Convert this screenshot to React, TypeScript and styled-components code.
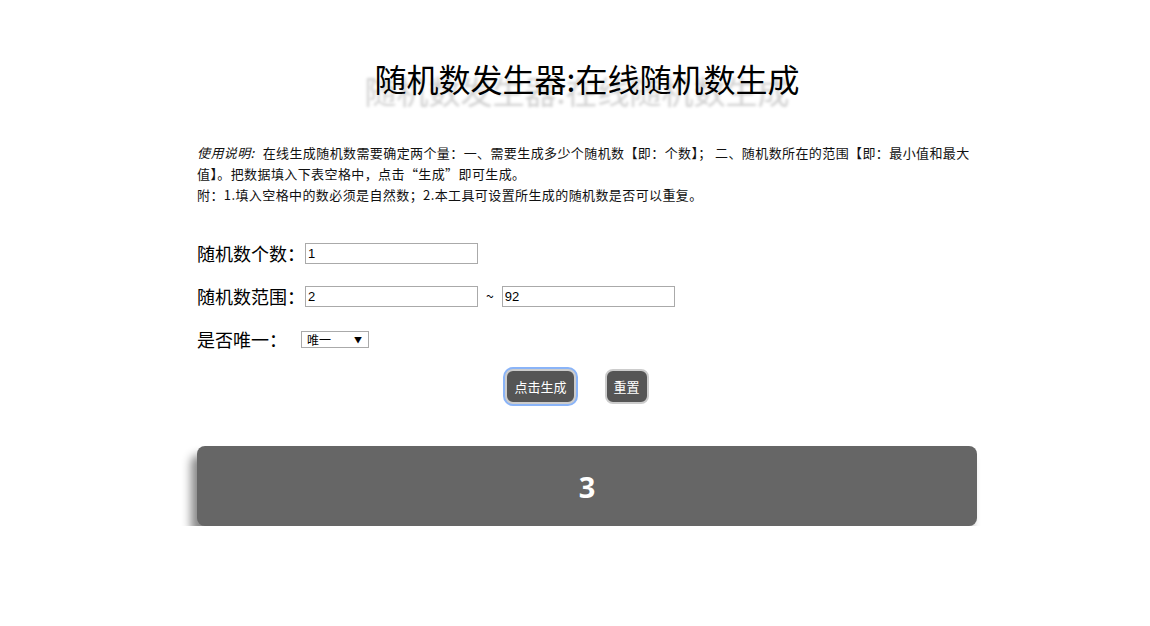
import styled, { createGlobalStyle } from "styled-components";

const GlobalStyle = createGlobalStyle`
  body {
    margin: 0;
    background: #fff;
    font-family: "Noto Sans CJK SC", "Liberation Sans", sans-serif;
    color: #000;
  }
`;

const Page = styled.div`
  width: 780px;
  margin: 0 auto;
  padding: 58px 0 0 24px;
`;

const Title = styled.h1`
  margin: 0;
  text-align: center;
  font-size: 32px;
  font-weight: 400;
  line-height: 40px;
  color: #000;
  text-shadow: -10px 12px 3px #d0d0d0;
`;

const Notes = styled.div`
  margin-top: 44px;
  font-size: 13px;
  letter-spacing: 0.4px;
  line-height: 21px;
  color: #111;
`;

const Em = styled.em`
  font-style: italic;
  display: inline-block;
  margin-right: 8px;
`;

const Form = styled.div`
  margin-top: 37px;
  display: flex;
  flex-direction: column;
  gap: 21px;
`;

const Row = styled.div`
  display: flex;
  align-items: center;
  height: 22px;
`;

const Label = styled.span<{ $w?: number }>`
  font-size: 18px;
  width: ${(p) => p.$w ?? 108}px;
  flex: none;
`;

const Input = styled.input`
  width: 173px;
  height: 21px;
  box-sizing: border-box;
  border: 1px solid #aaa;
  padding: 0 2px;
  font-family: "Liberation Sans", sans-serif;
  font-size: 13px;
  color: #000;
  outline: none;
`;

const Tilde = styled.span`
  margin: 0 8px;
  font-size: 14px;
`;

const Select = styled.div`
  width: 68px;
  height: 17px;
  box-sizing: border-box;
  border: 1px solid #aaa;
  display: flex;
  align-items: center;
  justify-content: space-between;
  padding: 0 6px 0 5px;
  font-size: 12px;
  color: #000;
`;

const Arrow = styled.span`
  font-size: 8px;
`;

const Buttons = styled.div`
  display: flex;
  justify-content: center;
  gap: 29px;
  margin-top: 19px;
  padding-right: 20px;
`;

const Button = styled.button<{ $focus?: boolean }>`
  height: 35px;
  padding: 0 7px;
  border-radius: 8px;
  background: #555;
  color: #fff;
  border: 2px solid #ccc;
  font-family: "Noto Sans CJK SC", sans-serif;
  font-size: 13px;
  box-shadow: ${(p) => (p.$focus ? "0 0 0 2px #8ab4f8" : "none")};
  cursor: pointer;
`;

const Result = styled.div`
  margin-top: 42px;
  height: 80px;
  border-radius: 8px;
  background: #666;
  box-shadow: -6px 9px 10px #888;
  display: flex;
  align-items: center;
  justify-content: center;
  color: #fff;
  font-family: "Open Sans", sans-serif;
  font-weight: 700;
  font-size: 29px;
`;

export default function App() {
  return (
    <>
      <GlobalStyle />
      <Page>
        <Title>随机数发生器:在线随机数生成</Title>
        <Notes>
          <Em>使用说明:</Em>在线生成随机数需要确定两个量：一、需要生成多少个随机数【即：个数】；
          二、随机数所在的范围【即：最小值和最大值】。把数据填入下表空格中，点击“生成”即可生成。
          <br />
          附：1.填入空格中的数必须是自然数；2.本工具可设置所生成的随机数是否可以重复。
        </Notes>
        <Form>
          <Row>
            <Label>随机数个数：</Label>
            <Input defaultValue="1" />
          </Row>
          <Row>
            <Label>随机数范围：</Label>
            <Input defaultValue="2" />
            <Tilde>~</Tilde>
            <Input defaultValue="92" />
          </Row>
          <Row>
            <Label $w={104}>是否唯一：</Label>
            <Select>
              <span>唯一</span>
              <Arrow>▼</Arrow>
            </Select>
          </Row>
        </Form>
        <Buttons>
          <Button $focus>点击生成</Button>
          <Button>重置</Button>
        </Buttons>
        <Result>3</Result>
      </Page>
    </>
  );
}
